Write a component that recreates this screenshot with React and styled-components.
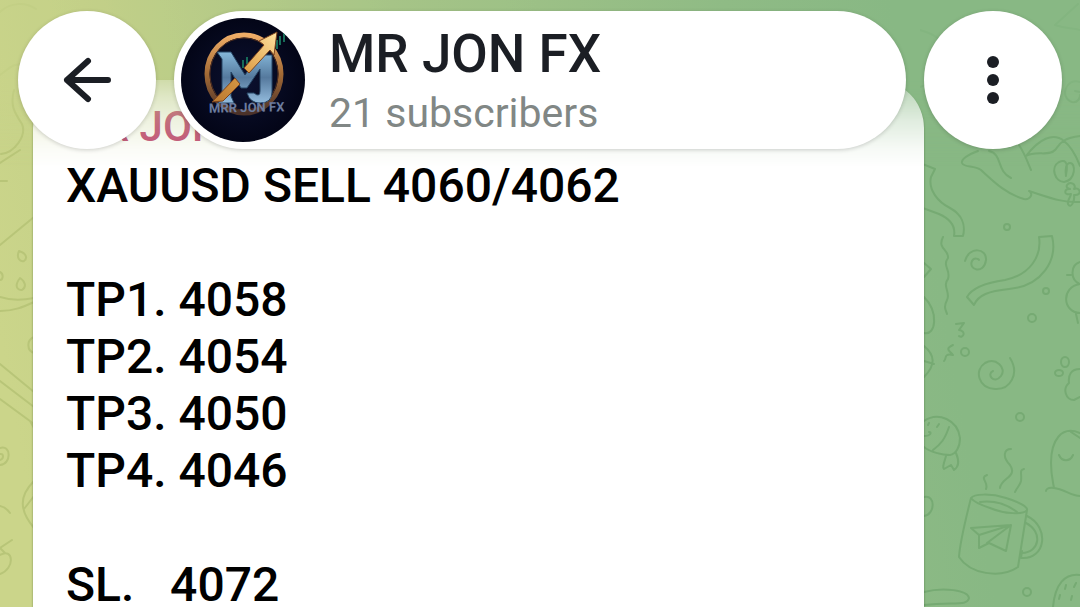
import React from "react"
import styled, { createGlobalStyle, css } from "styled-components"

const palette = {
  ink: "#1b1e24",
  gray: "#818785",
  pink: "#c44d78",
  lime: "#cbd58a",
  green: "#88b884",
}

const lines = [
  "XAUUSD SELL 4060/4062",
  "",
  "TP1. 4058",
  "TP2. 4054",
  "TP3. 4050",
  "TP4. 4046",
  "",
  "SL.   4072",
]

const GlobalStyle = createGlobalStyle`
  * {
    box-sizing: border-box;
  }
  body {
    margin: 0;
    font-family: Roboto, "Liberation Sans", sans-serif;
  }
`

const wallpaper = css`
  background: linear-gradient(
    80deg,
    ${palette.lime} 4%,
    #c3d088 16%,
    #a6c487 42%,
    #8fbb85 70%,
    ${palette.green} 84%
  );
`

const Chat = styled.div`
  position: relative;
  height: 100vh;
  overflow: hidden;
  ${wallpaper}
`

const Doodles = styled.svg`
  position: absolute;
  top: 0;
  ${({ $side }) => $side}: 0;
  fill: none;
  stroke: ${({ $side }) => ($side === "left" ? "#b8c578" : "#76aa73")};
  stroke-width: 2;
  stroke-linecap: round;
  stroke-linejoin: round;
`

const Fade = styled.div`
  position: absolute;
  top: 0;
  left: 0;
  right: 0;
  height: 168px;
  ${wallpaper}
  background-size: 100vw 100vh;
  mask-image: linear-gradient(
    rgba(0, 0, 0, 0.75) 46%,
    rgba(0, 0, 0, 0.48) 58%,
    rgba(0, 0, 0, 0.26) 72%,
    rgba(0, 0, 0, 0.08) 88%,
    transparent
  );
  pointer-events: none;
`

const Header = styled.header`
  position: absolute;
  top: 0;
  left: 0;
  right: 0;
  display: flex;
  gap: 18px;
  padding: 11px 18px;
`

const RoundButton = styled.button`
  display: flex;
  flex: none;
  align-items: center;
  justify-content: center;
  width: 138px;
  height: 138px;
  padding: 0;
  border: 0;
  border-radius: 50%;
  background: #fff;
  color: ${palette.ink};
  box-shadow: 0 1px 4px rgba(0, 0, 0, 0.18);
  cursor: pointer;
`

const ChatInfo = styled.button`
  display: flex;
  flex: 1;
  align-items: center;
  gap: 24px;
  min-width: 0;
  height: 138px;
  padding: 0 7px;
  border: 0;
  border-radius: 69px;
  background: #fff;
  font-family: inherit;
  text-align: left;
  box-shadow: 0 1px 4px rgba(0, 0, 0, 0.18);
  cursor: pointer;
`

const AvatarArt = styled.svg`
  flex: none;
  width: 124px;
  height: 124px;
  border-radius: 50%;
`

const Titles = styled.span`
  display: flex;
  flex-direction: column;
  padding-top: 6px;
`

const Title = styled.span`
  color: ${palette.ink};
  font-size: 53px;
  font-weight: 500;
  line-height: 60px;
  white-space: nowrap;
`

const Subtitle = styled.span`
  color: ${palette.gray};
  font-size: 41px;
  line-height: 58px;
  white-space: nowrap;
`

const Messages = styled.main`
  height: 100%;
  padding: 80px 156px 0 33px;
  overflow-y: auto;
  scrollbar-width: none;
`

const Bubble = styled.article`
  position: relative;
  padding: 17px 33px;
  border-radius: 48px 48px 16px 16px;
  background: #fff;
  box-shadow: 0 1px 2px rgba(40, 70, 30, 0.6);
`

const Author = styled.div`
  color: ${palette.pink};
  font-size: 42px;
  font-weight: 500;
  line-height: 60px;
`

const Text = styled.p`
  margin: 0;
  color: #000;
  font-size: 48px;
  font-weight: 500;
  line-height: 57px;
  white-space: pre-wrap;
`

const RightDoodles = () => (
  <Doodles $side="right" width="160" height="607" viewBox="920 0 160 607" aria-hidden="true">
    {/* dove */}
    <path d="M978 151 C970 154 961 158 962 163 C964 168 974 165 981 170 C994 182 1006 194 1024 199 C1030 200 1034 194 1029 191 C1048 197 1062 203 1080 202" />
    <path d="M989 151 C1003 154 996 171 1011 178M1019 145 C1025 154 1028 163 1031 170M1026 156 C1039 139 1053 132 1064 141 C1073 148 1077 158 1080 166M1026 156 C1036 150 1049 157 1055 150 C1060 144 1062 138 1080 136" />
    <path d="M1066 175 C1069 160 1064 160 1059 162 C1050 167 1055 182 1064 182 C1076 180 1076 163 1070 163 C1066 163 1065 169 1066 176" />
    <path d="M1067 185 C1070 181 1077 184 1074 189 C1080 186 1083 196 1074 195 C1075 200 1071 210 1068 204 C1067 200 1071 197 1071 194 C1063 196 1064 188 1070 189 C1067 188 1066 187 1067 185Z" />
    {/* top edge */}
    <path d="M895 0 C902 9 904 18 902 28 C920 28 935 34 942 42M907 54 C921 52 921 71 907 74M908 91 L923 86M1055 25 L1078 4M1055 25 C1066 29 1075 28 1080 30M1080 82 C1066 77 1059 98 1072 102 C1078 103 1080 98 1080 95M1080 92 L1075 91" />
    {/* ribbons */}
    <path d="M920 163 L935 169 L931 177 C928 190 938 202 950 208 C961 214 966 224 963 236 L954 236 C956 225 948 218 939 214 L920 207" />
    <path d="M1039 237 L1052 236 C1058 260 1042 286 1009 289 C989 291 978 295 974 305 L967 297 C972 288 984 283 1005 280 C1030 275 1042 256 1039 237Z" />
    <path d="M943 237 C937 249 949 249 948 258 C942 266 951 270 948 279 C942 286 951 293 947 300 C943 308 946 310 947 314" />
    {/* swirls */}
    <path d="M965 261 C969 246 987 248 986 260 C984 275 968 270 972 261 C974 257 979 259 979 260" />
    <path d="M1010 358 C1020 374 1010 390 995 389 C978 388 974 370 985 363 C996 357 1007 368 1001 376 C994 385 986 374 993 371" />
    <path d="M956 324 L964 323 L959 330 C967 331 963 339 959 336M953 345 C944 349 950 351 953 355 C943 353 947 359 944 361" />
    <circle cx="1007" cy="227" r="3" />
    <circle cx="965" cy="352" r="4" />
    <circle cx="1046" cy="291" r="3" />
    <circle cx="1032" cy="318" r="4" />
    <circle cx="1020" cy="417" r="4" />
    <circle cx="1027" cy="592" r="4" />
    {/* left slivers */}
    <path d="M924 263 L931 269 L924 277M924 297 C939 312 936 336 924 333M924 346 C935 355 936 365 924 377M924 361 L934 364" />
    {/* chick and paw */}
    <path d="M1080 262 C1070 265 1070 280 1080 284 C1061 287 1062 312 1080 313M1067 275 L1071 275M1076 314 L1078 323M1080 369 C1071 369 1068 375 1069 383 C1062 389 1066 400 1074 400 L1080 397" />
    <ellipse cx="1065" cy="362" rx="4" ry="5" />
    <ellipse cx="1059" cy="373" rx="4" ry="3" />
    {/* candy */}
    <path d="M924 421 C938 411 958 420 960 438 C960 447 956 454 950 455 C942 455 930 452 924 447M949 427 C945 439 941 444 933 450M928 425 L929 423M937 427 L939 424M924 436 C931 436 932 432 929 432M946 456 C944 463 942 468 944 469 L951 465 L954 470 C960 466 959 460 956 453" />
    {/* mug */}
    <path d="M971 498 C974 494 990 493 1006 498 C1019 502 1028 507 1027 510 C1024 515 1004 514 990 508 C981 505 973 501 971 498 C966 518 960 541 959 557 C970 574 1000 579 1018 567 L1027 510" />
    <path d="M980 502 C996 500 1009 506 1017 512M1027 516 C1050 527 1046 560 1021 558M1026 523 C1043 532 1040 552 1022 553M1021 558 L1022 551M971 528 L1011 525 L1006 551 L989 543 L979 548 L979 535ZM979 535 L1011 525 L987 543" />
    <path d="M1000 488 C1001 478 1018 477 1010 465 C1002 457 1004 449 1011 449M987 475 C979 478 989 482 986 489M1024 469 C1019 470 1022 474 1021 481 C1020 486 1017 487 1015 492" />
    {/* ghost and cactus */}
    <path d="M1080 433 C1061 425 1051 441 1051 463 C1051 475 1053 482 1054 488 C1047 487 1046 490 1046 491M1054 488 C1064 489 1071 496 1080 496M1059 455 C1062 462 1070 462 1073 455M1071 432 L1080 438" />
    <path d="M1053 607 C1055 584 1065 573 1080 575M1066 585 L1065 589M1076 583 L1074 587M1060 595 L1059 599M1072 596 L1071 600" />
    <path d="M924 497 C936 494 935 515 924 516M924 592 C943 587 968 590 969 598 C967 606 957 602 924 605" />
  </Doodles>
)

const LeftDoodles = () => (
  <Doodles $side="left" width="160" height="607" viewBox="0 0 160 607" aria-hidden="true">
    <path d="M0 12 C10 2 26 2 36 9M0 75 C10 68 13 63 22 65M14 90 C10 105 14 112 22 124 C27 136 14 153 1 154M0 163 L20 150M0 181 L7 181" />
    {/* melon slice */}
    <path d="M0 245 L34 217M0 297 C12 301 24 300 34 298M0 311 C14 311 23 307 34 302M0 272 C4 274 3 280 0 280" />
    <path d="M19 251 C16 258 20 262 24 261 C28 258 26 253 19 251ZM20 278 C14 286 17 290 22 290 C27 287 25 281 20 278Z" />
    <path d="M34 337 C26 340 27 351 34 353M0 364 L34 392M0 381 L34 407M0 399 L34 424M30 421 L34 428" />
    <path d="M0 448 C11 444 12 464 0 465M0 454 C4 453 4 459 0 460M34 481 C19 496 19 510 34 528M34 496 L24 509M0 506 C5 507 8 510 10 513M0 548 L12 540M0 548 L5 553M0 555 C14 547 15 569 0 574" />
  </Doodles>
)

const Avatar = () => (
  <AvatarArt viewBox="0 0 124 124" role="img" aria-label="MR JON FX">
    <defs>
      <radialGradient id="night">
        <stop offset="0" stopColor="#0c1130" />
        <stop offset="1" stopColor="#030517" />
      </radialGradient>
      <linearGradient id="gold" x1="0" y1="1" x2="1" y2="0">
        <stop offset="0" stopColor="#b9772f" />
        <stop offset="0.5" stopColor="#dfa04a" />
        <stop offset="1" stopColor="#ffe3a0" />
      </linearGradient>
      <linearGradient id="ring" x1="0" y1="0" x2="0" y2="1">
        <stop offset="0" stopColor="#efad67" />
        <stop offset="0.5" stopColor="#a36a35" />
        <stop offset="1" stopColor="#4b3129" />
      </linearGradient>
      <linearGradient id="steel" x1="0" y1="0" x2="0" y2="1">
        <stop offset="0" stopColor="#86b8da" />
        <stop offset="0.5" stopColor="#55799d" />
        <stop offset="1" stopColor="#93bbdd" />
      </linearGradient>
    </defs>
    <rect width="124" height="124" fill="url(#night)" />
    <path d="M96 31V22M99 27V18M103 24V15M62 50V42M66 46V39" stroke="#176b58" strokeWidth="2" />
    <ellipse cx="63" cy="56" rx="37" ry="39" fill="none" stroke="url(#ring)" strokeWidth="5" />
    <ellipse cx="63" cy="56" rx="34" ry="36" fill="none" stroke="#4d2d20" strokeWidth="1" />
    <path d="M36 34H50L64 57L78 37H91V74Q91 85 79 85Q69 85 66 75H73Q79 80 79 73V51L66 70H60L50 54V78L53 85H37L41 79V41Z" fill="url(#steel)" stroke="#274766" strokeWidth="1" />
    <path d="M31 84L54 60L59 66L42 83ZM63 50L83 27L78 23L96 14L93 37L89 32L68 55Z" fill="url(#gold)" stroke="#7b431f" strokeWidth="1" />
    <text x="28" y="94" fill="#6c7c9f" fontFamily="Roboto, sans-serif" fontWeight="700" fontSize="13" transform="rotate(-1 66 88)">
      MRR JON FX
    </text>
  </AvatarArt>
)

const BackIcon = () => (
  <svg width="50" height="48" viewBox="0 0 50 48" fill="none" stroke="currentColor" strokeWidth="6" strokeLinecap="round" strokeLinejoin="round" aria-hidden="true">
    <path d="M46 24H5M26 5L5 24L26 43" />
  </svg>
)

const MoreIcon = () => (
  <svg width="12" height="48" viewBox="0 0 12 48" fill="currentColor" aria-hidden="true">
    <circle cx="6" cy="6" r="6" />
    <circle cx="6" cy="24" r="6" />
    <circle cx="6" cy="42" r="6" />
  </svg>
)

const App = () => {
  return (
    <Chat>
      <GlobalStyle />
      <LeftDoodles />
      <RightDoodles />
      <Messages>
        <Bubble>
          <Author>MR JON FX</Author>
          <Text>{lines.join("\n")}</Text>
        </Bubble>
      </Messages>
      <Fade />
      <Header>
        <RoundButton aria-label="Back">
          <BackIcon />
        </RoundButton>
        <ChatInfo>
          <Avatar />
          <Titles>
            <Title>MR JON FX</Title>
            <Subtitle>21 subscribers</Subtitle>
          </Titles>
        </ChatInfo>
        <RoundButton aria-label="More options">
          <MoreIcon />
        </RoundButton>
      </Header>
    </Chat>
  )
}

export default App
